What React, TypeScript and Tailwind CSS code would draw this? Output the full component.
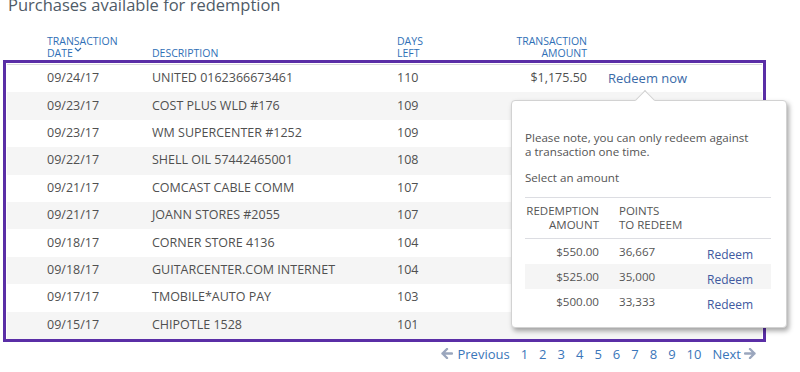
import React from 'react'

const rows = [
  { date: '09/24/17', desc: 'UNITED 0162366673461', days: '110', amount: '$1,175.50', action: true },
  { date: '09/23/17', desc: 'COST PLUS WLD #176', days: '109' },
  { date: '09/23/17', desc: 'WM SUPERCENTER #1252', days: '109' },
  { date: '09/22/17', desc: 'SHELL OIL 57442465001', days: '108' },
  { date: '09/21/17', desc: 'COMCAST CABLE COMM', days: '107' },
  { date: '09/21/17', desc: 'JOANN STORES #2055', days: '107' },
  { date: '09/18/17', desc: 'CORNER STORE 4136', days: '104' },
  { date: '09/18/17', desc: 'GUITARCENTER.COM INTERNET', days: '104' },
  { date: '09/17/17', desc: 'TMOBILE*AUTO PAY', days: '103' },
  { date: '09/15/17', desc: 'CHIPOTLE 1528', days: '101' },
]

const options = [
  { amount: '$550.00', points: '36,667' },
  { amount: '$525.00', points: '35,000' },
  { amount: '$500.00', points: '33,333' },
]

function Arrow({ dir }: { dir: 'left' | 'right' }) {
  return (
    <svg width="12" height="11" viewBox="0 0 12 11" className={dir === 'right' ? 'rotate-180' : ''}>
      <path d="M 6 1 L 1.5 5.5 L 6 10 M 1.5 5.5 L 11 5.5" fill="none" stroke="#9aa6bd" strokeWidth="2.4" strokeLinecap="round" strokeLinejoin="round" />
    </svg>
  )
}

export default function App() {
  return (
    <div className="relative w-[800px] h-[372px] overflow-hidden bg-white font-['Open_Sans',sans-serif]">
      <h1 className="mt-[-6px] pl-[8px] text-[16.5px] leading-[22px] font-normal text-[#4f5b67]">
        Purchases available for redemption
      </h1>

      {/* Column headers */}
      <div className="ml-[7px] mt-[19px] w-[755px] grid grid-cols-[145px_245px_110px_80px_1fr] items-end text-[10.5px] leading-[12px] uppercase text-[#2f6fb6]">
        <div className="pl-[40px]">
          Transaction
          <br />
          <span className="inline-flex items-start">
            Date
            <svg width="8" height="5" viewBox="0 0 8 5" className="ml-[1px]">
              <path d="M 1 1 L 4 4 L 7 1" fill="none" stroke="#2f6fb6" strokeWidth="1.2" />
            </svg>
          </span>
        </div>
        <div>Description</div>
        <div>
          Days
          <br />
          Left
        </div>
        <div className="text-right -ml-[40px]">
          Transaction
          <br />
          Amount
        </div>
        <div />
      </div>

      {/* Highlighted table */}
      <div className="ml-[3px] mt-[1px] w-[763px] border-[3px] border-[#5a2ea6] pt-[1px] px-[1px]">
        <div className="border-t border-[#dcdcdc]">
          {rows.map((r, i) => (
            <div
              key={i}
              className={`h-[27.4px] grid grid-cols-[145px_245px_110px_80px_1fr] items-center text-[12.5px] text-[#505050] ${i % 2 === 1 ? 'bg-[#f5f5f5]' : 'bg-white'}`}
            >
              <div className="pl-[40px]">{r.date}</div>
              <div>{r.desc}</div>
              <div>{r.days}</div>
              <div className="text-right">{r.amount ?? ''}</div>
              <div className="pl-[21px] text-[13px] text-[#3a6aa8]">{r.action ? 'Redeem now' : ''}</div>
            </div>
          ))}
        </div>
      </div>

      {/* Pagination */}
      <div className="w-[766px] mt-[3px] pr-[10px] flex justify-end items-center gap-[11px] text-[13px] leading-[18px] text-[#3a76b9]">
        <span className="flex items-center gap-[4px]">
          <Arrow dir="left" />
          Previous
        </span>
        {[1, 2, 3, 4, 5, 6, 7, 8, 9, 10].map((n) => (
          <span key={n}>{n}</span>
        ))}
        <span className="flex items-center gap-[3px]">
          Next
          <Arrow dir="right" />
        </span>
      </div>

      {/* Redeem popover */}
      <div className="absolute left-[511px] top-[100px] w-[276px] h-[228px] rounded-[4px] border border-[#d2d2d2] bg-white shadow-[2px_3px_5px_rgba(0,0,0,0.35)]">
        <div className="absolute left-[126px] top-[-8px] w-[14px] h-[14px] rotate-45 bg-white border-l border-t border-[#d2d2d2]" />
        <div className="relative pt-[30px] pl-[13px] pr-[15px] text-[11.6px] leading-[14px] text-[#555]">
          <p>
            Please note, you can only redeem against
            <br />a transaction one time.
          </p>
          <p className="mt-[12px]">Select an amount</p>
          <div className="mt-[12px] h-px bg-[#dcdde2]" />
          <div className="grid grid-cols-[74px_68px_1fr] gap-x-[20px] pt-[6px] pb-[6px] text-[11.5px] leading-[14px] uppercase border-b border-[#dcdde2]">
            <div className="text-right">
              Redemption
              <br />
              Amount
            </div>
            <div>
              Points
              <br />
              To Redeem
            </div>
            <div />
          </div>
          {options.map((o, i) => (
            <div
              key={i}
              className={`h-[25px] grid grid-cols-[74px_68px_1fr] gap-x-[20px] items-center ${i === 1 ? 'bg-[#f5f5f5]' : ''}`}
            >
              <div className="text-right">{o.amount}</div>
              <div>{o.points}</div>
              <div className="pt-[6px] text-[12px] text-[#40599f]">Redeem</div>
            </div>
          ))}
        </div>
      </div>
    </div>
  )
}
